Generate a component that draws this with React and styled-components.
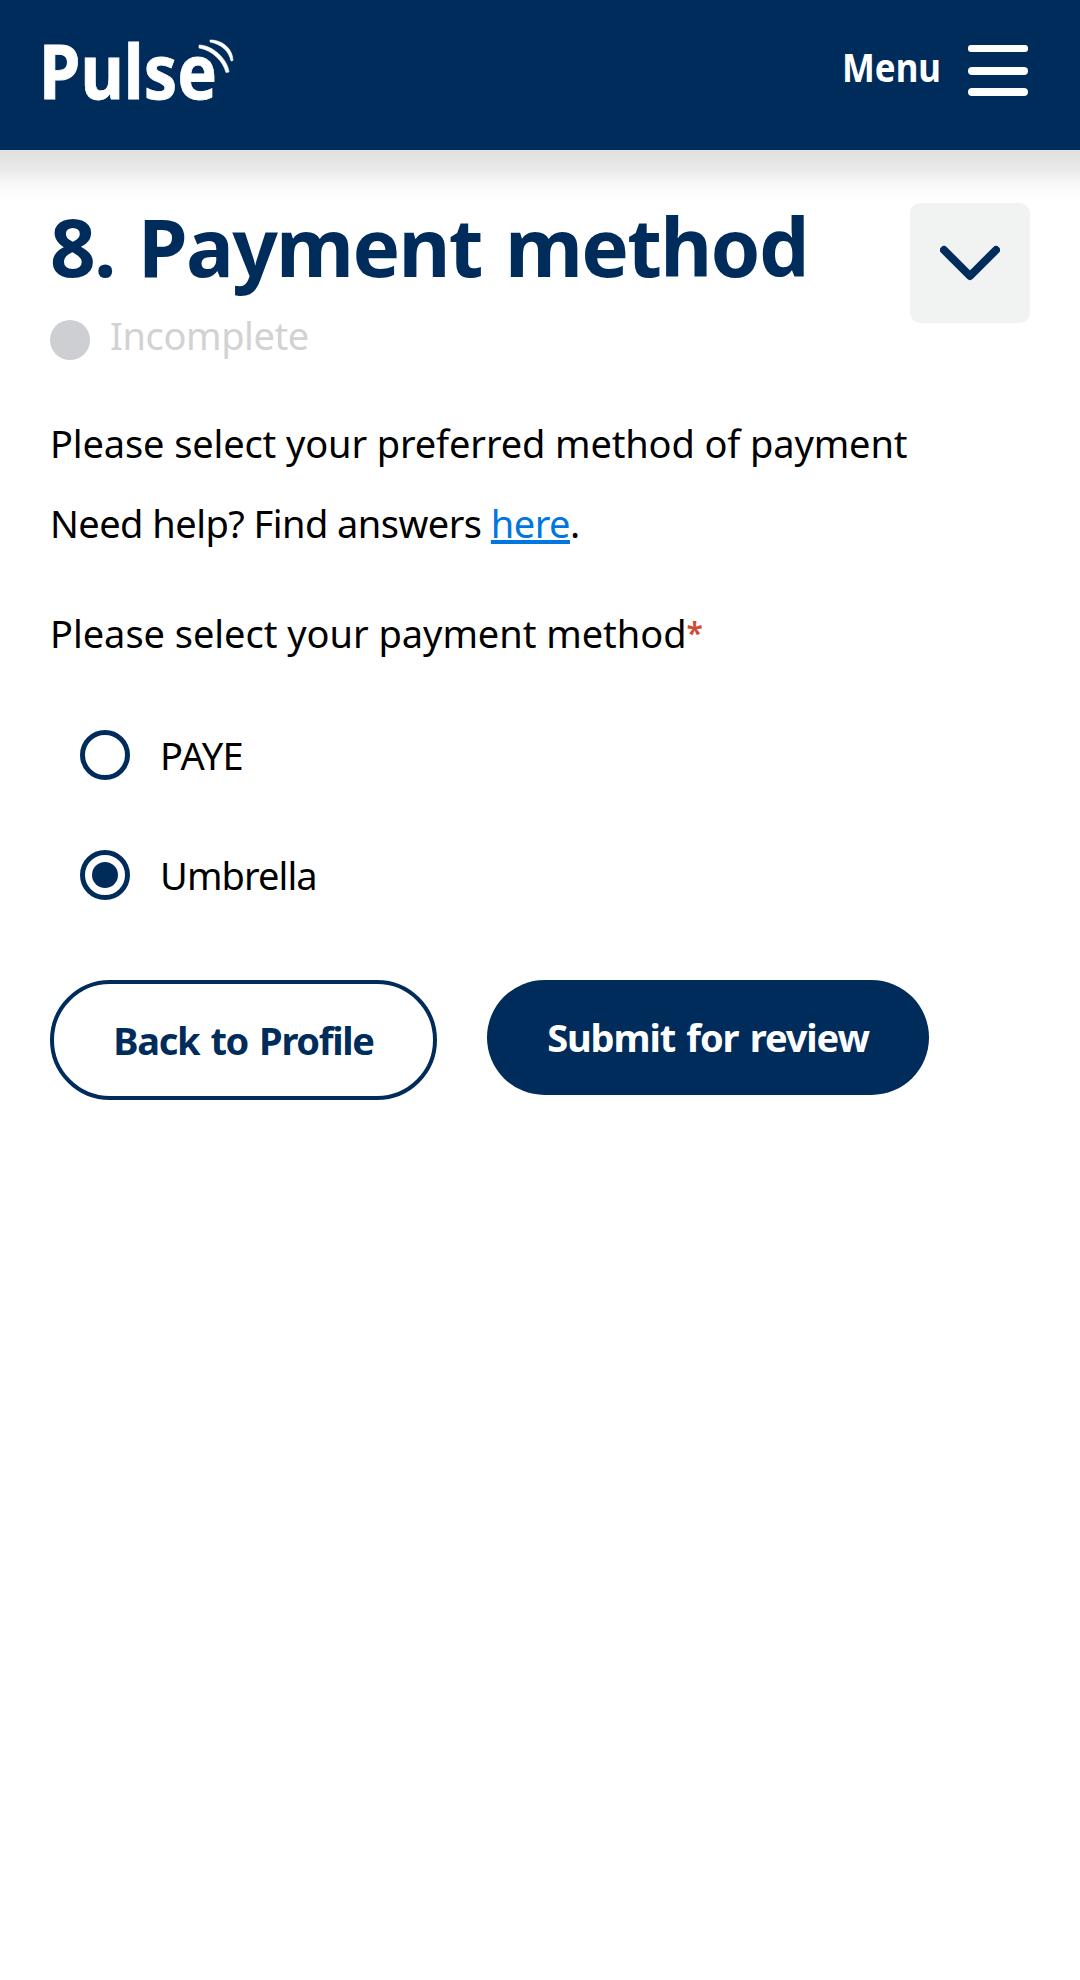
import React, { useState } from "react";
import styled, { createGlobalStyle } from "styled-components";

const navy = "#002c5b";

const GlobalStyle = createGlobalStyle`
  *, *::before, *::after { box-sizing: border-box; }
  body {
    margin: 0;
    background: #fff;
    color: #000;
    font-family: "Noto Sans", "Open Sans", sans-serif;
    font-size: 38px;
    line-height: 60px;
  }
  button { font-family: inherit; padding: 0; cursor: pointer; }
`;

const Page = styled.div`
  min-height: 1980px;
  overflow: hidden;
  background: #fff;
`;

const Header = styled.header`
  display: flex;
  justify-content: space-between;
  align-items: flex-start;
  height: 150px;
  padding: 0 52px 0 35px;
  background: ${navy};
`;

const Logo = styled.svg`
  display: block;
  width: 200px;
  height: 100px;
  margin-top: 17px;
  overflow: visible;
`;

const MenuButton = styled.button`
  display: flex;
  align-items: flex-start;
  gap: 18px;
  height: 100px;
  border: 0;
  background: none;
  color: #fff;
`;

const MenuLabel = styled.svg`
  display: block;
  width: 116px;
  height: 70px;
  margin-top: 32px;
  overflow: visible;
`;

const Bars = styled.svg`
  display: block;
  width: 60px;
  height: 52px;
  margin-top: 45px;
`;

const HeaderShade = styled.div`
  height: 53px;
  background: linear-gradient(#e2e2e2 0, #e4e4e4 10px, #ebebeb 21px, #f5f5f5 31px, #fbfbfb 40px, #fefefe 50px, #fff 53px);
`;

const Main = styled.main`
  padding: 0 50px;
`;

const SectionHeader = styled.div`
  display: flex;
  justify-content: space-between;
  align-items: flex-start;
  height: 167px;
`;

const Title = styled.h1`
  margin: -7px 0 0;
  color: ${navy};
  font-size: 80px;
  font-weight: 700;
  line-height: 100px;
  letter-spacing: -1.7px;
  word-spacing: 4px;
  white-space: nowrap;
`;

const Status = styled.div`
  display: flex;
  align-items: flex-start;
  gap: 20px;
  margin-top: 9px;
  color: #d2d2d2;
  letter-spacing: -0.4px;
`;

const StatusDot = styled.span`
  width: 40px;
  height: 40px;
  margin-top: 15px;
  border-radius: 50%;
  background: #cdcfd3;
`;

const Toggle = styled.button`
  display: grid;
  place-items: center;
  width: 120px;
  height: 120px;
  border: 0;
  border-radius: 10px;
  background: #f1f3f3;
`;

const Copy = styled.p`
  margin: ${(p) => p.$top || 0}px 0 0;
  height: 60px;
  letter-spacing: ${(p) => p.$track || 0}px;
  white-space: nowrap;
`;

const HelpLink = styled.a`
  color: #0077e0;
  text-decoration: underline;
  text-decoration-thickness: 4px;
  text-underline-offset: 2px;
  text-decoration-skip-ink: none;
`;

const Required = styled.span`
  color: #d04b35;
  font-size: 30px;
  font-weight: 600;
  line-height: 1;
  vertical-align: 4px;
`;

const Options = styled.div`
  display: grid;
  gap: 70px;
  padding: 67px 0 0 30px;
`;

const Option = styled.label`
  display: flex;
  align-items: center;
  gap: 30px;
  height: 50px;
  letter-spacing: ${(p) => p.$track || 0}px;
  cursor: pointer;
`;

const RadioInput = styled.input`
  appearance: none;
  display: grid;
  place-items: center;
  width: 50px;
  height: 50px;
  margin: 0;
  border: 5px solid ${navy};
  border-radius: 50%;

  &:checked::before {
    content: "";
    width: 26px;
    height: 26px;
    border-radius: 50%;
    background: ${navy};
  }
`;

const Actions = styled.div`
  display: flex;
  align-items: flex-start;
  gap: 50px;
  margin-top: 80px;
`;

const Action = styled.button`
  width: ${(p) => (p.$filled ? 442 : 387)}px;
  height: ${(p) => (p.$filled ? 115 : 120)}px;
  padding-bottom: ${(p) => (p.$filled ? 1 : 0)}px;
  border: ${(p) => (p.$filled ? "0" : `4px solid ${navy}`)};
  border-radius: 60px;
  background: ${(p) => (p.$filled ? navy : "#fff")};
  color: ${(p) => (p.$filled ? "#fff" : navy)};
  font-size: 38px;
  font-weight: 700;
  line-height: 60px;
  letter-spacing: ${(p) => (p.$filled ? -1.1 : -1.3)}px;
  word-spacing: 2.5px;
  white-space: nowrap;
`;

const methods = [
  { name: "PAYE", track: -0.7 },
  { name: "Umbrella", track: -0.9 },
];

export default function App() {
  const [method, setMethod] = useState("Umbrella");

  return (
    <Page>
      <GlobalStyle />
      <Header>
        <Logo viewBox="0 0 200 100" aria-label="Pulse">
          <text x="4" y="81.5" fill="#fff" stroke="#fff" strokeWidth="0.8" fontSize="76" fontWeight="700" textLength="178" lengthAdjust="spacingAndGlyphs">
            Pulse
          </text>
          <path d="M164 28 C178 28 193 43 194 55 L191 55.5 C188 44 177 33 164 31 Z" fill="#fff" stroke="#fff" strokeWidth="0.6" />
          <path d="M175 23 C187 22.5 198 32 198 43.5 L196 44 C194 34 186 27 175 25 Z" fill="#fff" stroke="#fff" strokeWidth="0.6" />
        </Logo>
        <MenuButton aria-label="Menu">
          <MenuLabel viewBox="0 0 116 70">
            <text x="8" y="50" fill="#fff" fontSize="40" fontWeight="700" textLength="99" lengthAdjust="spacingAndGlyphs">
              Menu
            </text>
          </MenuLabel>
          <Bars viewBox="0 0 60 52" fill="#fff">
            <rect width="60" height="7" rx="3" />
            <rect y="22" width="60" height="8" rx="4" />
            <rect y="43" width="60" height="8" rx="4" />
          </Bars>
        </MenuButton>
      </Header>
      <HeaderShade />
      <Main>
        <SectionHeader>
          <div>
            <Title>8. Payment method</Title>
            <Status>
              <StatusDot />
              Incomplete
            </Status>
          </div>
          <Toggle aria-label="Collapse section">
            <svg width="60" height="36" viewBox="0 0 60 36" fill="none">
              <path d="M4 5 L30 31 L56 5" stroke={navy} strokeWidth="8" strokeLinecap="round" strokeLinejoin="round" />
            </svg>
          </Toggle>
        </SectionHeader>
        <Copy $top={43} $track={-0.13}>Please select your preferred method of payment</Copy>
        <Copy $top={20} $track={-0.54}>
          Need help? Find answers <HelpLink href="#">here</HelpLink>.
        </Copy>
        <Copy $top={50} $track={-0.04}>
          Please select your payment method<Required>*</Required>
        </Copy>
        <Options>
          {methods.map((m) => (
            <Option key={m.name} $track={m.track}>
              <RadioInput
                type="radio"
                name="method"
                checked={method === m.name}
                onChange={() => setMethod(m.name)}
              />
              {m.name}
            </Option>
          ))}
        </Options>
        <Actions>
          <Action>Back to Profile</Action>
          <Action $filled>Submit for review</Action>
        </Actions>
      </Main>
    </Page>
  );
}
